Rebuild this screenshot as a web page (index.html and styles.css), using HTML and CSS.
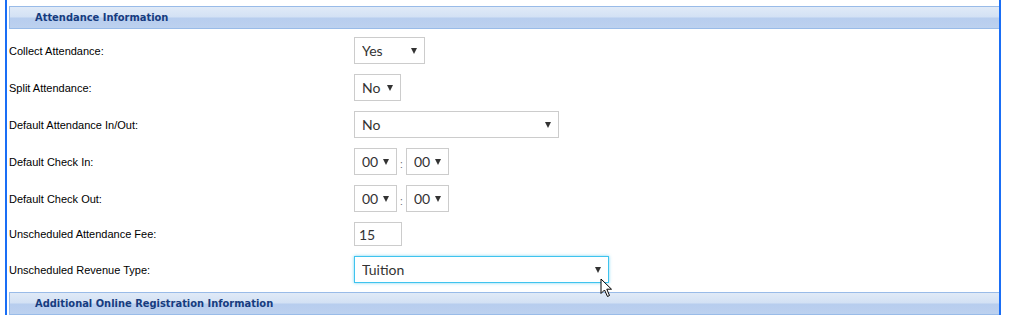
FILE: index.html
```html
<!DOCTYPE html>
<html>
<head>
    <title>Attendance Information</title>
    <meta charset='UTF-8'>
    <link rel="stylesheet" href="styles.css">
</head>
<body>
    <div class='panel'>
        <div class='section-head'><span>Attendance Information</span></div>

        <div class='row'>
            <label class='lbl'>Collect Attendance:</label>
            <div class='sel w-yes'><select><option>Yes</option><option>No</option></select></div>
        </div>
        <div class='row'>
            <label class='lbl'>Split Attendance:</label>
            <div class='sel w-no'><select><option>No</option><option>Yes</option></select></div>
        </div>
        <div class='row'>
            <label class='lbl'>Default Attendance In/Out:</label>
            <div class='sel w-mid'><select><option>No</option><option>In</option><option>Out</option></select></div>
        </div>
        <div class='row'>
            <label class='lbl'>Default Check In:</label>
            <div class='sel w-time'><select><option>00</option></select></div>
            <span class='colon'>:</span>
            <div class='sel w-time'><select><option>00</option></select></div>
        </div>
        <div class='row'>
            <label class='lbl'>Default Check Out:</label>
            <div class='sel w-time'><select><option>00</option></select></div>
            <span class='colon'>:</span>
            <div class='sel w-time'><select><option>00</option></select></div>
        </div>
        <div class='row'>
            <label class='lbl'>Unscheduled Attendance Fee:</label>
            <input class='txt' type='text' value='15'>
        </div>
        <div class='row'>
            <label class='lbl'>Unscheduled Revenue Type:</label>
            <div class='sel w-wide focused'>
                <select><option>Tuition</option></select>
                <svg class='cursor' width='13' height='20' viewBox='0 0 13 20'>
                    <path d='M1 1 L1 15.5 L4.5 12 L7.5 18.5 L9.5 17.5 L6.8 11.2 L11.5 11.2 Z' fill='#fff' stroke='#000' stroke-width='1' stroke-linejoin='round'/>
                </svg>
            </div>
        </div>

        <div class='section-head last'><span>Additional Online Registration Information</span></div>
    </div>
</body>
</html>
```

FILE: styles.css
```css
body { margin: 0; background: #fff; font-family: "Liberation Sans", Arial, sans-serif; }

.panel {
    margin-left: 5px;
    width: 996px;
    height: 315px;
    border-left: 2px solid #1a6ef5;
    border-right: 2px solid #1a6ef5;
    padding: 6px 0 0 2px;
    box-sizing: border-box;
    overflow: hidden;
}

.section-head {
    width: 991px;
    height: 23px;
    margin-bottom: 3px;
    border: 1px solid #99bbe8;
    border-right-color: #c5d7f1;
    background: linear-gradient(#e0eaf7 0, #d3e1f4 48%, #b7cdee 52%, #bcd1ef 100%);
    box-sizing: border-box;
    color: #163c80;
    font-size: 11px;
    font-weight: bold;
    font-family: Tahoma, "DejaVu Sans Condensed", "Liberation Sans", sans-serif;
    line-height: 21px;
    padding-left: 25px;
}
.section-head.last { margin-top: 4px; }

.row { display: flex; align-items: center; padding: 5px 0; }
.lbl { width: 345px; font-size: 11px; color: #000; }

.sel { position: relative; height: 27px; }
.sel select {
    appearance: none;
    -webkit-appearance: none;
    width: 100%;
    height: 100%;
    border: 1px solid #ccc;
    border-radius: 0;
    background: #fff;
    color: #333;
    font-family: Lato, "Open Sans", sans-serif;
    font-size: 14px;
    padding: 0 0 0 7px;
    outline: none;
}
.sel::after {
    content: "";
    position: absolute;
    right: 8px;
    top: 11px;
    border-left: 3.5px solid transparent;
    border-right: 3.5px solid transparent;
    border-top: 6px solid #333;
    pointer-events: none;
}
.w-yes { width: 71px; }
.w-no { width: 47px; }
.w-mid { width: 205px; }
.w-time { width: 43px; }
.w-wide { width: 255px; }

.focused select { border-color: #3fc3ee; box-shadow: 0 0 3px rgba(63, 195, 238, 0.7); }

.colon { width: 9px; text-align: center; font-size: 10px; color: #666; padding-top: 6px; }

.txt {
    width: 48px;
    height: 24px;
    box-sizing: border-box;
    border: 1px solid #ccc;
    padding: 0 0 0 4px;
    font-family: Lato, "Open Sans", sans-serif;
    font-size: 14px;
    color: #333;
    outline: none;
}

.cursor { position: absolute; left: 246px; top: 22px; }
```
